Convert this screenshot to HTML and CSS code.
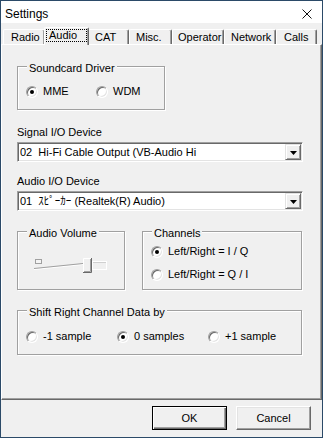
FILE: index.html
```html
<!DOCTYPE html>
<html>
<head>
<meta charset="utf-8">
<link rel="stylesheet" href="styles.css">
</head>
<body>
<div class="window">
  <div class="titlebar">
    <span class="title">Settings</span>
    <svg class="close" width="10" height="10" viewBox="0 0 10 10"><path d="M0.5 0.5 L9.5 9.5 M9.5 0.5 L0.5 9.5" stroke="#111" stroke-width="1" fill="none"/></svg>
  </div>
  <div class="tabs">
    <div class="tab t-radio">Radio</div>
    <div class="tab selected t-audio"><span class="focus">Audio</span></div>
    <div class="tab t-cat">CAT</div>
    <div class="tab t-misc">Misc.</div>
    <div class="tab t-operator">Operator</div>
    <div class="tab t-network">Network</div>
    <div class="tab t-calls">Calls</div>
  </div>
  <div class="panel">
    <div class="group g-driver">
      <span class="group-label">Soundcard Driver</span>
      <div class="opts">
        <label class="opt o-mme"><span class="radio on"></span>MME</label>
        <label class="opt"><span class="radio"></span>WDM</label>
      </div>
    </div>

    <div class="field-label first">Signal I/O Device</div>
    <div class="combo">
      <span class="combo-text">02  Hi-Fi Cable Output (VB-Audio Hi</span>
      <span class="combo-btn"><svg width="7" height="4" viewBox="0 0 7 4"><path d="M0 0 H7 L3.5 4 Z" fill="#000"/></svg></span>
    </div>

    <div class="field-label">Audio I/O Device</div>
    <div class="combo">
      <span class="combo-text">01  ｽﾋﾟｰｶｰ (Realtek(R) Audio)</span>
      <span class="combo-btn"><svg width="7" height="4" viewBox="0 0 7 4"><path d="M0 0 H7 L3.5 4 Z" fill="#000"/></svg></span>
    </div>

    <div class="group-row">
      <div class="group g-volume">
        <span class="group-label">Audio Volume</span>
        <svg class="slider" width="74" height="18" viewBox="0 0 74 18">
          <rect x="1.5" y="2.5" width="6" height="4" fill="#f4f4f4" stroke="#a0a0a0"/>
          <path d="M0 12.5 L49 7.5" stroke="#fff" stroke-width="1" fill="none"/>
          <path d="M0 11.5 L49 6.5" stroke="#a0a0a0" stroke-width="1" fill="none"/>
          <rect x="58.5" y="4.5" width="14" height="8" fill="#f0f0f0" stroke="#fff"/>
          <path d="M59 5.5 H72" stroke="#d0d0d0"/>
          <rect x="49" y="1" width="9" height="15" fill="#f0f0f0"/>
          <path d="M49.5 16 V1.5 H58" stroke="#fff" fill="none"/>
          <path d="M49 15.5 H57.5 V1" stroke="#696969" fill="none"/>
          <path d="M50 14.5 H56.5 V2" stroke="#a0a0a0" fill="none"/>
        </svg>
      </div>
      <div class="group g-channels">
        <span class="group-label">Channels</span>
        <label class="opt"><span class="radio on"></span>Left/Right = I / Q</label>
        <label class="opt second"><span class="radio"></span>Left/Right = Q / I</label>
      </div>
    </div>

    <div class="group g-shift">
      <span class="group-label">Shift Right Channel Data by</span>
      <div class="opts">
        <label class="opt o-shift"><span class="radio"></span>-1 sample</label>
        <label class="opt o-shift"><span class="radio on"></span>0 samples</label>
        <label class="opt"><span class="radio"></span>+1 sample</label>
      </div>
    </div>
  </div>
  <div class="footer">
    <button class="btn default">OK</button>
    <button class="btn">Cancel</button>
  </div>
</div>
</body>
</html>
```
FILE: styles.css
```css
* { box-sizing: border-box; }
html, body { margin: 0; padding: 0; }
body {
  width: 323px;
  height: 438px;
  overflow: hidden;
  font-family: "Liberation Sans", "Noto Sans CJK JP", Arial, sans-serif;
  font-size: 11px;
  line-height: 13px;
  color: #000;
  background: #f0f0f0;
}
.window {
  width: 323px;
  height: 438px;
  border: 1px solid #2b4a68;
  background: #f0f0f0;
  display: flex;
  flex-direction: column;
}
.titlebar {
  flex: none;
  height: 22px;
  background: #fff;
  display: flex;
  align-items: center;
  justify-content: space-between;
  padding: 3px 10px 0 4px;
}
.title {
  font-size: 12px;
  line-height: 16px;
  color: #000;
}
.close { display: block; }

.tabs {
  flex: none;
  height: 17px;
  margin-top: 4px;
  padding-left: 2px;
  display: flex;
  align-items: flex-end;
}
.tab {
  height: 15px;
  background: #f0f0f0;
  border-top: 1px solid #fff;
  border-left: 1px solid #fff;
  border-right: 1px solid #696969;
  box-shadow: inset -1px 0 0 #a0a0a0;
  border-top-left-radius: 2px;
  border-top-right-radius: 2px;
  padding: 1px 0 0 6px;
  white-space: nowrap;
}
.tab.selected {
  position: relative;
  z-index: 2;
  height: 18px;
  margin: 0 -1px -1px -1px;
  padding: 0;
}
.focus {
  display: block;
  margin: 1px 0 0 1px;
  width: 41px;
  border: 1px dotted #000;
  line-height: 11px;
  padding-left: 2px;
}
.t-radio { width: 42px; padding-left: 7px; }
.t-audio { width: 45px; }
.t-cat { width: 41px; }
.t-misc { width: 43px; }
.t-operator { width: 52px; padding-left: 5px; }
.t-network { width: 52px; }
.t-calls { width: 41px; padding-left: 7px; }

.panel {
  flex: none;
  height: 356px;
  border: 1px solid;
  border-color: #fff #696969 #696969 #fff;
  box-shadow: inset -1px -1px 0 #a0a0a0;
  padding: 21px 0 0 15px;
}

.group {
  position: relative;
  border: 1px solid #a0a0a0;
  box-shadow: inset 1px 1px 0 #fff, 1px 1px 0 #fff;
}
.group-label {
  position: absolute;
  top: -5px;
  left: 9px;
  padding: 0 2px;
  background: #f0f0f0;
  white-space: nowrap;
}
.g-driver {
  width: 148px;
  height: 44px;
  padding: 18px 0 0 7px;
}
.opts { display: flex; }
.opt {
  display: flex;
  align-items: center;
  height: 13px;
  white-space: nowrap;
}
.o-mme { width: 70px; }
.o-shift { width: 91px; }
.radio {
  position: relative;
  flex: none;
  width: 12px;
  height: 12px;
  margin-right: 5px;
  border-radius: 50%;
  border: 1px solid;
  border-color: #a0a0a0 #fff #fff #a0a0a0;
  background: #fff;
  box-shadow: inset 1px 1px 0 #696969, inset -1px -1px 0 #e3e3e3;
}
.radio.on::after {
  content: "";
  position: absolute;
  left: 3px;
  top: 3px;
  width: 4px;
  height: 4px;
  border-radius: 50%;
  background: #000;
}

.field-label { margin-top: 13px; }
.field-label.first { margin-top: 16px; }
.combo {
  margin-top: 3px;
  width: 286px;
  height: 20px;
  border: 1px solid;
  border-color: #a0a0a0 #fff #fff #a0a0a0;
  box-shadow: inset 1px 1px 0 #696969, inset -1px -1px 0 #e3e3e3;
  background: #fff;
  padding: 1px 1px 1px 2px;
  display: flex;
  align-items: center;
}
.combo-text {
  flex: 1;
  white-space: pre;
  overflow: hidden;
}
.combo-btn {
  flex: none;
  width: 16px;
  height: 16px;
  background: #f0f0f0;
  border: 1px solid;
  border-color: #e3e3e3 #696969 #696969 #e3e3e3;
  box-shadow: inset 1px 1px 0 #fff, inset -1px -1px 0 #a0a0a0;
  display: flex;
  align-items: center;
  justify-content: center;
  padding-top: 1px;
}
.combo-btn svg { display: block; }

.group-row {
  margin-top: 20px;
  display: flex;
  gap: 17px;
}
.g-volume {
  width: 108px;
  height: 59px;
  padding: 25px 0 0 16px;
}
.slider { display: block; }
.g-channels {
  width: 160px;
  height: 59px;
  padding: 13px 0 0 8px;
}
.g-channels .second { margin-top: 10px; }

.g-shift {
  margin-top: 20px;
  width: 285px;
  height: 45px;
  padding: 19px 0 0 8px;
}
.g-driver { padding-left: 8px; }

.footer {
  flex: 1;
  display: flex;
  justify-content: flex-end;
  gap: 9px;
  padding: 6px 11px 0 0;
}
.btn {
  width: 75px;
  height: 24px;
  font: inherit;
  color: #000;
  background: #f0f0f0;
  border: 1px solid;
  border-color: #fff #696969 #696969 #fff;
  box-shadow: inset -1px -1px 0 #a0a0a0, inset 1px 1px 0 #e3e3e3;
  padding: 0;
}
.btn.default {
  border-color: #000;
  box-shadow: inset 1px 1px 0 #fff, inset -1px -1px 0 #696969, inset -2px -2px 0 #a0a0a0;
}
```
